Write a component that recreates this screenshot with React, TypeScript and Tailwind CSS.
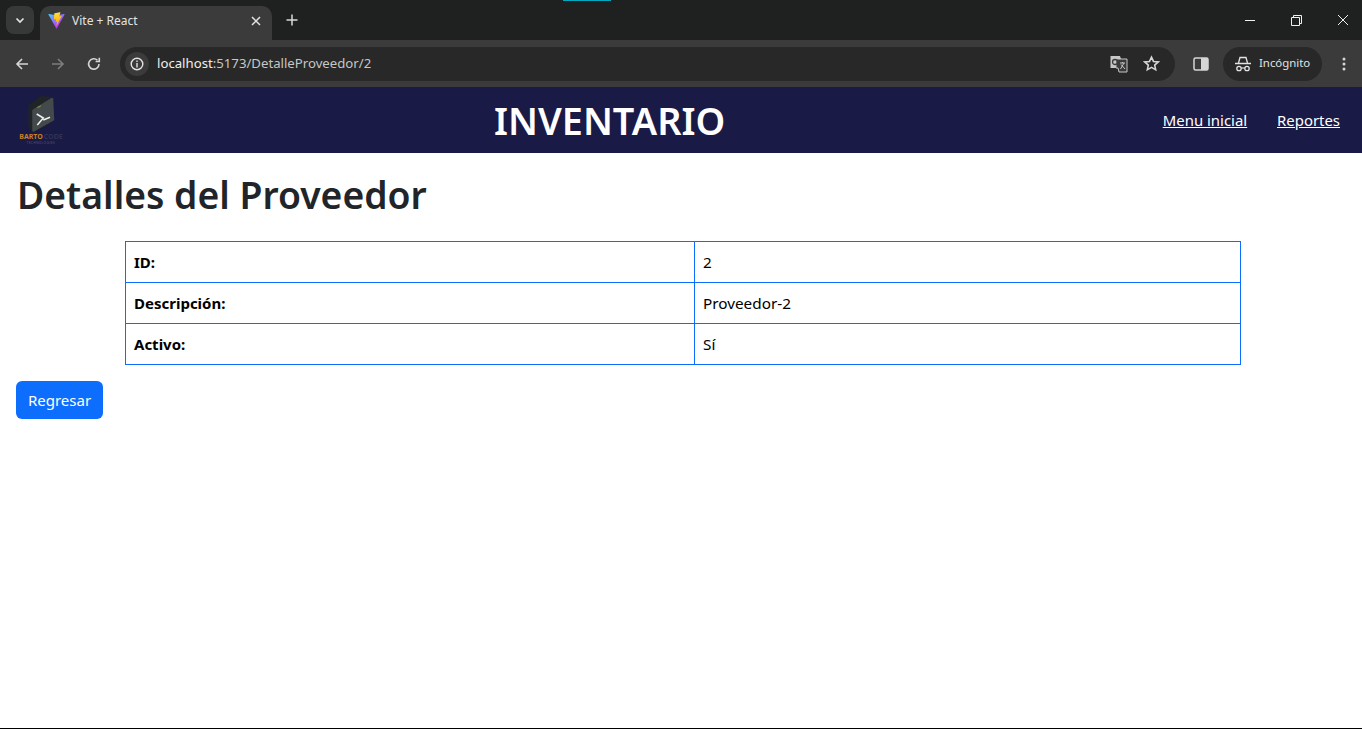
import React from "react";

const ui = "font-['Noto_Sans',sans-serif]";

function ViteIcon() {
  return (
    <svg width="17" height="17" viewBox="0 0 410 404" className="shrink-0">
      <defs>
        <linearGradient id="va" x1="6" y1="33" x2="235" y2="344" gradientUnits="userSpaceOnUse">
          <stop stopColor="#41D1FF" />
          <stop offset="1" stopColor="#BD34FE" />
        </linearGradient>
        <linearGradient id="vb" x1="194" y1="8" x2="236" y2="292" gradientUnits="userSpaceOnUse">
          <stop stopColor="#FFEA83" />
          <stop offset="0.08" stopColor="#FFDD35" />
          <stop offset="1" stopColor="#FFA800" />
        </linearGradient>
      </defs>
      <path fill="url(#va)" d="M399.6 59.5 215 389.7c-3.8 6.8-13.6 6.8-17.5.1L9.2 59.5C5 52.1 11.300 43.100 19.700 44.600l184.800 33c1.200.2 2.400.2 3.600 0l180.900-33c8.300-1.500 14.700 7.400 10.600 14.900Z" />
      <path fill="url(#vb)" d="M292.900 1.600 156.300 28.400c-2.200.4-3.900 2.300-4 4.600l-8.400 142.200c-.2 3.300 2.900 5.900 6.100 5.200l38-8.800c3.600-.8 6.800 2.300 6.100 5.900l-11.300 55.300c-.8 3.700 2.800 6.900 6.400 5.800l23.500-7.100c3.600-1.100 7.100 2.100 6.400 5.800l-18 87.100c-1.100 5.500 6.200 8.400 9.200 3.700l2-3.100 111.300-222.100c1.900-3.700-1.400-8-5.400-7.200l-39.100 7.500c-3.700.7-6.800-2.700-5.800-6.300l25.500-88.500c1-3.600-2.100-7.100-5.900-6.300Z" />
    </svg>
  );
}

function Logo() {
  return (
    <div className="w-[50px] h-[50px] flex flex-col items-center">
      <svg width="27" height="38" viewBox="0 0 27 38" className="shrink-0">
        <path d="M1.500 11 L13 2 L23 3 L24 26 L5 36.500 L1.500 31 Z" fill="#1f2426" stroke="#1f2426" strokeWidth="2" strokeLinejoin="round" />
        <path d="M5.500 15.500 L24 4 L25 24.500 L5.500 35.500 Z" fill="#44494b" stroke="#44494b" strokeWidth="2.500" strokeLinejoin="round" />
        <circle cx="9.500" cy="12.500" r="0.700" fill="#c0503a" />
        <circle cx="11" cy="11.700" r="0.700" fill="#c9a23a" />
        <circle cx="12.500" cy="11" r="0.700" fill="#4a9a5a" />
        <path d="M8.700 19 L15.300 23 L9.300 30 M15.300 25 L22 22.300" stroke="#f2f2f2" strokeWidth="1.500" fill="none" />
      </svg>
      <div className="flex text-[7px] leading-[8px] font-bold font-['Noto_Sans',sans-serif]">
        <span className="text-[#c9801e]">BARTO</span>
        <span className="text-[#2f3252] ml-[1px]">CODE</span>
      </div>
      <div className="text-[3px] leading-[4px] text-[#55587a] tracking-[0.5px]">TECHNOLOGIES</div>
    </div>
  );
}

function Browser() {
  return (
    <div className={`${ui} shrink-0`}>
      <div className="h-[40px] bg-[#1f2121] flex items-start relative">
        <div className="absolute left-[563px] top-0 w-[48px] h-[1px] bg-[#00a9bd]" />
        <div className="ml-[6px] mt-[6px] w-[28px] h-[28px] rounded-[8px] bg-[#373838] flex items-center justify-center">
          <svg width="12" height="12" viewBox="0 0 12 12" fill="none" stroke="#e3e3e3" strokeWidth="1.700">
            <path d="M2.500 4.500 L6 8 L9.500 4.500" />
          </svg>
        </div>
        <div className="ml-[6px] mt-[6px] w-[232px] h-[34px] bg-[#3b3b3b] rounded-t-[10px] flex items-center pl-[8px] pr-[11px] pb-[5px]">
          <ViteIcon />
          <span className="ml-[7px] text-[12px] text-[#e3e3e3] flex-1 whitespace-nowrap">Vite + React</span>
          <svg width="10" height="10" viewBox="0 0 10 10" stroke="#e3e3e3" strokeWidth="1.500">
            <path d="M1 1 L9 9 M9 1 L1 9" />
          </svg>
        </div>
        <svg width="12" height="12" viewBox="0 0 12 12" stroke="#d8d8d8" strokeWidth="1.500" className="ml-[14px] mt-[14px]">
          <path d="M6 0.500 V11.500 M0.500 6 H11.500" />
        </svg>
        <div className="ml-auto flex items-center h-[40px]">
          <svg width="10" height="10" viewBox="0 0 10 10" stroke="#f0f0f0" strokeWidth="1" className="mr-[36px]">
            <path d="M0 5.500 H10" />
          </svg>
          <svg width="11" height="11" viewBox="0 0 11 11" stroke="#f0f0f0" strokeWidth="1" fill="none" className="mr-[36px]">
            <path d="M0.500 2.500 H8.500 V10.500 H0.500 Z M2.500 2.500 V0.500 H10.500 V8.500 H8.500" />
          </svg>
          <svg width="10" height="10" viewBox="0 0 10 10" stroke="#f0f0f0" strokeWidth="1" className="mr-[14px]">
            <path d="M0 0 L10 10 M10 0 L0 10" />
          </svg>
        </div>
      </div>
      <div className="h-[47px] bg-[#3b3b3b] flex items-center">
        <svg width="16" height="16" viewBox="0 0 16 16" fill="none" stroke="#d6d6d6" strokeWidth="1.600" className="ml-[14px]">
          <path d="M14 8 H3 M8 3 L3 8 L8 13" />
        </svg>
        <svg width="16" height="16" viewBox="0 0 16 16" fill="none" stroke="#7d7d7d" strokeWidth="1.600" className="ml-[20px]">
          <path d="M2 8 H13 M8 3 L13 8 L8 13" />
        </svg>
        <svg width="16" height="16" viewBox="0 0 16 16" fill="none" stroke="#d6d6d6" strokeWidth="1.600" className="ml-[20px]">
          <path d="M13 8 A5.200 5.200 0 1 1 11.500 4.300" />
          <path d="M13.300 1.800 V5.500 H9.600" />
        </svg>
        <div className="ml-[18px] w-[1055px] h-[34px] rounded-full bg-[#282828] flex items-center pl-[5px] pr-[15px]">
          <div className="w-[24px] h-[24px] rounded-full bg-[#3b3b3b] flex items-center justify-center">
            <svg width="14" height="14" viewBox="0 0 14 14" fill="none" stroke="#e3e3e3" strokeWidth="1.400">
              <circle cx="7" cy="7" r="5.800" />
              <path d="M7 6 V10.500 M7 3.500 V5" />
            </svg>
          </div>
          <span className="ml-[8px] text-[13.200px] leading-[18px] pb-[2px] whitespace-nowrap text-[#c4c7c5]">
            <span className="text-[#f0f0f0]">localhost</span>:5173/DetalleProveedor/2
          </span>
          <svg width="18" height="18" viewBox="0 0 18 18" className="ml-auto">
            <path d="M0.500 1 H10 L11 4 V13 H0.500 Z" fill="#c4c7c5" />
            <path d="M6 4 H17 V17 H9 L8 13 H6 Z" fill="#3b3b3b" stroke="#c4c7c5" strokeWidth="1" />
            <circle cx="5" cy="7" r="2.500" fill="none" stroke="#3b3b3b" strokeWidth="1.300" />
            <path d="M10 8 H15 M12.500 7 V8 M14 8 L10.500 14 M11 9.500 L15 14" stroke="#c4c7c5" strokeWidth="1" fill="none" />
          </svg>
          <svg width="17" height="17" viewBox="0 0 24 24" fill="none" stroke="#d6d6d6" strokeWidth="2.200" className="ml-[15px]">
            <path d="M12 3 L14.800 9.100 L21.500 9.800 L16.500 14.300 L17.900 20.900 L12 17.500 L6.100 20.900 L7.500 14.300 L2.500 9.800 L9.200 9.100 Z" />
          </svg>
        </div>
        <svg width="16" height="14" viewBox="0 0 16 14" className="ml-[18px]">
          <rect x="1" y="1" width="14" height="12" rx="1.500" fill="none" stroke="#d6d6d6" strokeWidth="1.500" />
          <rect x="8" y="1" width="7" height="12" fill="#d6d6d6" />
        </svg>
        <div className="ml-[14px] w-[99px] h-[34px] rounded-full bg-[#282828] flex items-center pl-[12px]">
          <svg width="16" height="16" viewBox="0 0 16 16" fill="none" stroke="#e3e3e3" className="shrink-0">
            <path d="M3.500 7 L5 1.500 H11 L12.500 7" strokeWidth="1.300" />
            <path d="M0 7.500 H16" strokeWidth="1.500" />
            <circle cx="4" cy="12.500" r="2.200" strokeWidth="1.300" />
            <circle cx="12" cy="12.500" r="2.200" strokeWidth="1.300" />
            <path d="M6.300 12 H9.700" strokeWidth="1.200" />
          </svg>
          <span className="ml-[8px] text-[11.400px] leading-[16px] pb-[2px] text-[#e3e3e3] whitespace-nowrap">Incógnito</span>
        </div>
        <svg width="4" height="14" viewBox="0 0 4 14" fill="#d6d6d6" className="ml-[20px]">
          <circle cx="2" cy="2" r="1.500" />
          <circle cx="2" cy="7" r="1.500" />
          <circle cx="2" cy="12" r="1.500" />
        </svg>
      </div>
    </div>
  );
}

export default function App() {
  const rows = [
    ["ID:", "2"],
    ["Descripción:", "Proveedor-2"],
    ["Activo:", "Sí"],
  ];
  return (
    <div className={`${ui} w-[1362px] h-[729px] overflow-hidden bg-white flex flex-col`}>
      <Browser />
      <header className="h-[66px] bg-[#1a1a47] flex items-center text-white pl-[16px] pr-[22px] shrink-0">
        <Logo />
        <h1 className="text-[37.800px] font-semibold ml-[428px] whitespace-nowrap leading-none pt-[2px]">INVENTARIO</h1>
        <nav className="ml-auto flex gap-[30px] text-[14.900px] underline">
          <a>Menu inicial</a>
          <a>Reportes</a>
        </nav>
      </header>
      <main className="flex-1 flex flex-col px-[16px]">
        <h2 className="mt-[18px] ml-[1px] text-[37.300px] font-semibold leading-[48px] text-[#212529] whitespace-nowrap">
          Detalles del Proveedor
        </h2>
        <table className="mt-[22px] ml-[109px] w-[1116px] border-collapse text-[15px] text-black table-fixed">
          <colgroup>
            <col className="w-[569px]" />
            <col />
          </colgroup>
          <tbody>
            {rows.map(([k, v]) => (
              <tr key={k} className="h-[41px]">
                <th className="border border-[#0d6efd] px-[8px] py-0 text-left font-bold">{k}</th>
                <td className="border border-[#0d6efd] px-[8px] py-0 text-[15.300px]">{v}</td>
              </tr>
            ))}
          </tbody>
        </table>
        <button className="mt-[16px] self-start h-[38px] w-[87px] rounded-[6px] bg-[#0d6efd] text-white text-[15px] pt-[1px]">
          Regresar
        </button>
      </main>
      <div className="h-[1px] bg-black shrink-0" />
    </div>
  );
}
